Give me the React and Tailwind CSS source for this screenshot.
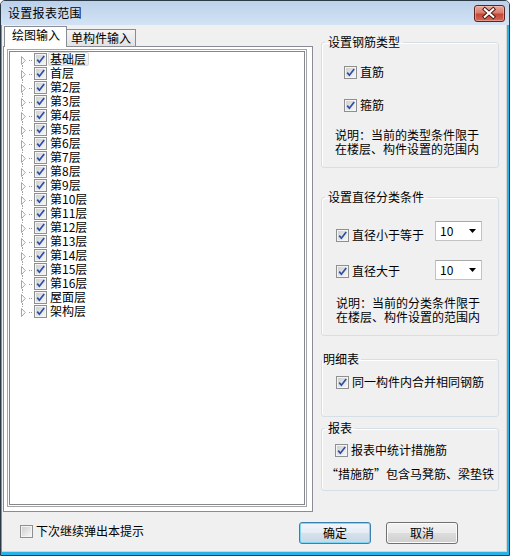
import React from "react";

const floors = [
  "基础层",
  "首层",
  ...Array.from({ length: 15 }, (_, i) => `第${i + 2}层`),
  "屋面层",
  "架构层",
];

function Check({ checked = true }) {
  return (
    <span className="inline-flex w-[13px] h-[13px] shrink-0 border border-[#8e8f8f] bg-[#f4f4f4] p-px">
      <span className="relative flex-1 bg-gradient-to-br from-[#cfcfcf] to-[#f6f6f6]">
        {checked && (
          <svg className="absolute left-0 top-0 overflow-visible" width="9" height="9" viewBox="0 0 9 9">
            <path d="M1.2 4.6 L3.4 7.2 L8.2 1" fill="none" stroke="#2d4ea6" strokeWidth="1.7" />
          </svg>
        )}
      </span>
    </span>
  );
}

function TreeRow({ label, first, last, selected }) {
  return (
    <div className="flex items-center h-[14px] pl-[10px]">
      <svg width="13" height="14" viewBox="0 0 13 14" className="shrink-0">
        {!first && (
          <>
            <rect x="2" y="0" width="1" height="1" fill="#a0a0a0" />
            <rect x="2" y="2" width="1" height="1" fill="#a0a0a0" />
          </>
        )}
        {!last && <rect x="2" y="13" width="1" height="1" fill="#a0a0a0" />}
        <rect x="9" y="8" width="1" height="1" fill="#a0a0a0" />
        <rect x="11" y="8" width="1" height="1" fill="#a0a0a0" />
        <path d="M1.5 4.5 V12.5 L5.3 8.5 Z" fill="#fff" stroke="#a6a6a6" />
      </svg>
      <span className="ml-px">
        <Check />
      </span>
      <span
        className={
          "ml-px h-[14px] flex items-center pl-px pr-[2px] border rounded-[2px] leading-[12px] " +
          (selected
            ? "border-[#d9d9d9] bg-gradient-to-b from-[#fbfbfb] to-[#ebebeb]"
            : "border-transparent")
        }
      >
        {label}
      </span>
    </div>
  );
}

function Dropdown() {
  return (
    <div className="w-[47px] h-[20px] border border-[#c3c3c3] border-t-[#a9a9a9] bg-white flex items-center justify-between pl-[4px] pr-[4px]">
      <span className="leading-[14px]">10</span>
      <svg width="8" height="4" viewBox="0 0 8 4">
        <path d="M0 0 H7 L3.5 4 Z" fill="#000" />
      </svg>
    </div>
  );
}

function CheckLabel({ children, checked = true }) {
  return (
    <div className="flex items-center h-[14px]">
      <Check checked={checked} />
      <span className="ml-[3px] leading-[14px] whitespace-nowrap">{children}</span>
    </div>
  );
}

export default function App() {
  return (
    <div className="w-[510px] h-[556px] flex flex-col border border-[#2c3947] rounded-t-[5px] overflow-hidden bg-[#f0f0f0] text-[12px] leading-[14px] text-black font-['Noto_Sans_CJK_SC','SimSun',sans-serif]">
      {/* title bar */}
      <div className="h-[24px] shrink-0 flex items-start justify-between bg-gradient-to-b from-[#bbd1ea] to-[#d3e3f5]">
        <span className="pl-[7px] pt-[5px] tracking-[0.3px]">设置报表范围</span>
        <button className="mt-[4px] mr-[4px] w-[31px] h-[17px] rounded-[3px] border border-[#5b2420] bg-[linear-gradient(#eaa99a,#d77d6c_45%,#c3453a_55%,#d26a52)] shadow-[inset_0_0_0_1px_rgba(255,210,200,0.45)] flex items-center justify-center">
          <svg width="31" height="17" viewBox="0 0 31 17">
            <path d="M10.5 4 L19.5 12 M19.5 4 L10.5 12" stroke="#4a1612" strokeWidth="4.2" strokeLinecap="square" />
            <path d="M10.5 4 L19.5 12 M19.5 4 L10.5 12" stroke="#fff" strokeWidth="2.2" strokeLinecap="square" />
          </svg>
        </button>
      </div>

      {/* body */}
      <div className="flex-1 flex flex-col border-l border-r-2 border-b-[3px] border-[#2ab2e7]">
        <div className="flex-1 flex flex-col border-r border-b border-[#d4d4d4]">
          <div className="flex">
            {/* tab control */}
            <div className="w-[310px] ml-px pt-px flex flex-col">
              <div className="relative z-10 flex items-end h-[21px] pl-px">
                <div className="h-[21px] w-[63px] border border-b-0 border-[#898c95] bg-white pl-[7px] pt-[1px]">
                  绘图输入
                </div>
                <div className="mb-px h-[17px] w-[69px] border border-l-0 border-b-0 border-[#898c95] bg-gradient-to-b from-[#f4f4f4] to-[#e2e2e2] pl-[4px] pt-px">
                  单构件输入
                </div>
              </div>
              <div className="-mt-px h-[466px] border border-[#898c95] bg-white">
                <div className="ml-[3px] mt-[2px] w-[300px] h-[458px] border border-[#a5a5a5] p-px bg-white">
                  <div className="h-full border border-[#828790] bg-white">
                    {floors.map((f, i) => (
                      <TreeRow
                        key={f}
                        label={f}
                        first={i === 0}
                        last={i === floors.length - 1}
                        selected={i === 0}
                      />
                    ))}
                  </div>
                </div>
              </div>
            </div>

            {/* right column */}
            <div className="ml-[8px] w-[178px] mt-[10px] flex flex-col">
              <fieldset className="border border-[#d5dfe5] rounded-[3px] shadow-[inset_1px_1px_0_#fff]">
                <legend className="ml-[3px] px-[3px] leading-[14px]">设置钢筋类型</legend>
                <div className="pt-[16px] pb-[11px]">
                  <div className="pl-[22px]">
                    <CheckLabel>直筋</CheckLabel>
                  </div>
                  <div className="pl-[22px] mt-[19px]">
                    <CheckLabel>箍筋</CheckLabel>
                  </div>
                  <p className="mt-[16px] pl-[13px] leading-[14px]">
                    说明：当前的类型条件限于
                    <br />
                    在楼层、构件设置的范围内
                  </p>
                </div>
              </fieldset>

              <fieldset className="mt-[22px] border border-[#d5dfe5] rounded-[3px] shadow-[inset_1px_1px_0_#fff]">
                <legend className="ml-[3px] px-[3px] leading-[14px]">设置直径分类条件</legend>
                <div className="pt-[17px] pb-[11px] pl-[14px]">
                  <div className="flex items-start h-[20px]">
                    <div className="w-[99px] pt-[7px]">
                      <CheckLabel>直径小于等于</CheckLabel>
                    </div>
                    <Dropdown />
                  </div>
                  <div className="flex items-start h-[20px] mt-[19px]">
                    <div className="w-[99px] pt-[4px]">
                      <CheckLabel>直径大于</CheckLabel>
                    </div>
                    <Dropdown />
                  </div>
                  <p className="mt-[16px] leading-[14px]">
                    说明：当前的分类条件限于
                    <br />
                    在楼层、构件设置的范围内
                  </p>
                </div>
              </fieldset>

              <fieldset className="mt-[16px] border border-[#d5dfe5] rounded-[3px] shadow-[inset_1px_1px_0_#fff]">
                <legend className="pl-px pr-[2px] leading-[14px]">明细表</legend>
                <div className="pt-[9px] pb-[27px] pl-[14px]">
                  <CheckLabel>同一构件内合并相同钢筋</CheckLabel>
                </div>
              </fieldset>

              <fieldset className="mt-[4px] border border-[#d5dfe5] rounded-[3px] shadow-[inset_1px_1px_0_#fff]">
                <legend className="ml-[3px] px-[3px] leading-[14px]">报表</legend>
                <div className="pt-[8px] pb-[9px]">
                  <div className="pl-[13px]">
                    <CheckLabel>报表中统计措施筋</CheckLabel>
                  </div>
                  <p className="mt-[10px] pl-[4px] leading-[14px] whitespace-nowrap">
                    “措施筋”包含马凳筋、梁垫铁
                  </p>
                </div>
              </fieldset>
            </div>
          </div>

          {/* bottom row */}
          <div className="flex items-start pt-[10px] pl-[18px] pr-[48px]">
            <div className="mt-[2px]">
              <CheckLabel checked={false}>下次继续弹出本提示</CheckLabel>
            </div>
            <div className="flex-1" />
            <button className="w-[72px] h-[22px] rounded-[3px] border border-[#3c7fb1] shadow-[inset_0_0_0_1px_#7fd6f7] bg-[linear-gradient(#f0f5f9,#e5edf3_50%,#d6e2ec_50%,#c9d8e5)] leading-[14px]">
              确定
            </button>
            <button className="ml-[15px] w-[72px] h-[22px] rounded-[3px] border border-[#707070] shadow-[inset_0_0_0_1px_#fbfbfb] bg-[linear-gradient(#f2f2f2,#ebebeb_50%,#dddddd_50%,#cfcfcf)] leading-[14px]">
              取消
            </button>
          </div>
        </div>
      </div>
    </div>
  );
}
